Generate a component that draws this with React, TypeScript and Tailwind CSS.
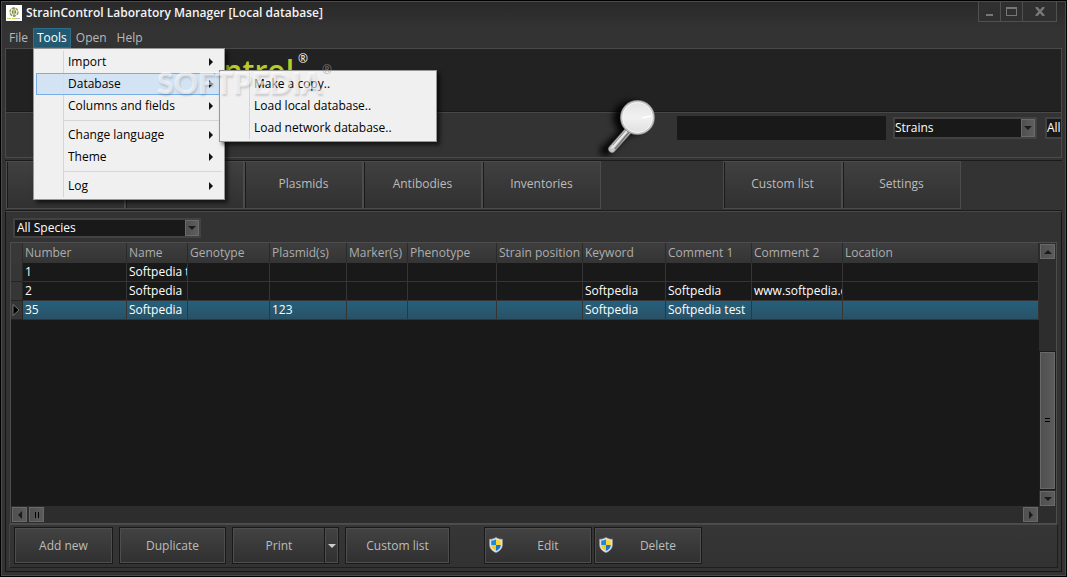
import React from "react";

const UI = "font-['Open_Sans','Noto_Sans',sans-serif]";

function ArrowDown({ className = "" }: { className?: string }) {
  return (
    <svg viewBox="0 0 8 4" className={`h-1 w-2 ${className}`} aria-hidden="true">
      <path d="M0 0h8L4 4z" fill="currentColor" />
    </svg>
  );
}

function Combo({ label, value, className, inset = "p-0" }: { label: string; value: string; className: string; inset?: string }) {
  return (
    <label className={`relative block shrink-0 ${className}`}>
      <select
        aria-label={label}
        className={`block h-full w-full appearance-none border-2 border-[#424242] bg-[#191919] text-xs text-white outline-none ${inset}`}
      >
        <option>{value}</option>
      </select>
      <span className="pointer-events-none absolute right-0.5 top-0.5 bottom-0.5 flex w-3.5 items-center justify-center border border-[#6a6a6a] bg-linear-to-r from-[#505050] to-[#5e5e5e] text-[#1c1c1c]">
        <ArrowDown />
      </span>
    </label>
  );
}

function MenuItem({ text, arrow, active, children }: { text: string; arrow?: boolean; active?: boolean; children?: React.ReactNode }) {
  return (
    <li className="relative">
      <button
        type="button"
        className={`flex h-[22px] w-full items-center justify-between border pl-[31px] pr-2 text-left text-xs text-black ${
          active ? "border-[#78aee5] bg-[#cfe1f3]/90" : "border-transparent"
        }`}
      >
        <span className="whitespace-nowrap">{text}</span>
        {arrow && (
          <svg viewBox="0 0 4 8" className="h-2 w-1" aria-hidden="true">
            <path d="M0 0l4 4-4 4z" fill="#111" />
          </svg>
        )}
      </button>
      {children}
    </li>
  );
}

function MenuPanel({ className, children }: { className: string; children: React.ReactNode }) {
  return (
    <ul
      className={`absolute border border-[#979797] bg-[#f0f0f0] bg-[linear-gradient(#d5d5d5,#d5d5d5)] bg-size-[1px_calc(100%-4px)] bg-position-[29px_2px] bg-no-repeat p-0.5 shadow-[3px_3px_4px_rgba(0,0,0,0.6)] ${className}`}
    >
      {children}
    </ul>
  );
}

function Separator() {
  return (
    <li role="separator" className="flex h-[7px] items-center pl-7">
      <div className="h-px w-full bg-[#d7d7d7]" />
    </li>
  );
}

function ToolsMenu() {
  return (
    <MenuPanel className="left-0 top-5 z-20 w-48">
      <MenuItem text="Import" arrow />
      <MenuItem text="Database" arrow active>
        <MenuPanel className="left-[183px] -top-[3px] z-30 w-[218px]">
          <MenuItem text="Make a copy.." />
          <MenuItem text="Load local database.." />
          <MenuItem text="Load network database.." />
        </MenuPanel>
      </MenuItem>
      <MenuItem text="Columns and fields" arrow />
      <Separator />
      <MenuItem text="Change language" arrow />
      <MenuItem text="Theme" arrow />
      <Separator />
      <MenuItem text="Log" arrow />
    </MenuPanel>
  );
}

function AppIcon() {
  return (
    <svg viewBox="0 0 16 16" className="h-4 w-4" aria-hidden="true">
      <path d="M0 0h16v16H0z" fill="#fff" />
      <circle cx="8" cy="7" r="4" fill="#eef0dc" stroke="#8a9640" strokeWidth="1.3" strokeDasharray="3 1" />
      <path d="M8 2.500v9.500M6.500 5.500v3M9.500 5.500v3" stroke="#7b8450" strokeWidth="1" />
      <path d="M1 13.500h4M6 13.500h4" stroke="#c6d36a" strokeWidth="1" />
      <path d="M10 13.500h4" stroke="#bbb" strokeWidth="1" />
    </svg>
  );
}

function Magnifier({ className }: { className: string }) {
  return (
    <svg viewBox="0 0 72 68" className={`h-[68px] w-[72px] ${className}`} aria-hidden="true">
      <defs>
        <linearGradient id="lens" x1="0" y1="0" x2="0" y2="1">
          <stop offset="0" stopColor="#e4e4e4" />
          <stop offset="0.5" stopColor="#f1f1f1" />
          <stop offset="1" stopColor="#e0e0e0" />
        </linearGradient>
        <filter id="soft" x="-40%" y="-40%" width="180%" height="180%">
          <feGaussianBlur stdDeviation="3" />
        </filter>
      </defs>
      <g filter="url(#soft)" opacity="0.9">
        <circle cx="35" cy="29" r="17" fill="#000" />
        <path d="M29 44L10 62" stroke="#000" strokeWidth="10" strokeLinecap="round" />
      </g>
      <path d="M33 42L17 60" stroke="#555" strokeWidth="8" strokeLinecap="round" />
      <path d="M33 42L17 60" stroke="#c4c4c4" strokeWidth="6.500" strokeLinecap="round" />
      <path d="M32 40L18 56" stroke="#8a8a8a" strokeWidth="1" />
      <path d="M35 42L20 60" stroke="#777" strokeWidth="1.500" />
      <path d="M33 41L17 59" stroke="#f0f0f0" strokeWidth="1.500" strokeLinecap="round" />
      <circle cx="42.500" cy="28.500" r="17.500" fill="#777" />
      <circle cx="42.500" cy="28.500" r="16.800" fill="#c4c4c4" />
      <circle cx="42.500" cy="28.500" r="15" fill="url(#lens)" stroke="#f6f6f6" strokeWidth="1" />
      <path d="M47 29l9-2" stroke="#fff" strokeWidth="1.500" />
    </svg>
  );
}

function Shield() {
  return (
    <svg viewBox="0 0 14 16" className="h-4 w-3.5" aria-hidden="true">
      <path d="M7 .4C5 1.800 3 2.200.6 2.200v5.300c0 4 2.700 6.700 6.400 8.100 3.700-1.400 6.400-4.100 6.400-8.100V2.200C11 2.200 9 1.800 7 .4z" fill="#e4e8ec" stroke="#9ba3a8" strokeWidth=".6" />
      <path d="M7 2.200C5.500 3.100 4 3.500 2.200 3.600V8H7z" fill="#1f86e0" />
      <path d="M7 2.200c1.500.9 3 1.300 4.800 1.400V8H7z" fill="#fbd72e" />
      <path d="M2.200 8c.2 2.900 2 4.800 4.800 6V8z" fill="#f7cb1c" />
      <path d="M11.800 8c-.2 2.900-2 4.800-4.800 6V8z" fill="#1b74cf" />
    </svg>
  );
}

function TitleBar() {
  return (
    <header className="flex h-[26px] items-start justify-between bg-linear-to-b from-[#292929] to-[#333] pr-2">
      <div className="flex h-[22px] items-center gap-1 pl-1">
        <AppIcon />
        <h1 className="text-xs leading-4 font-semibold text-[#f4f4f4]">StrainControl Laboratory Manager [Local database]</h1>
      </div>
      <div className="flex h-5 divide-x divide-[#505050] border-x border-b border-[#505050] bg-[#303030] text-[#777]">
        <button type="button" aria-label="Minimize" className="flex w-[22px] items-center justify-center">
          <svg viewBox="0 0 8 8" className="h-2 w-2"><path d="M0 6h7v2H0z" fill="currentColor" /></svg>
        </button>
        <button type="button" aria-label="Maximize" className="flex w-[22px] items-center justify-center">
          <svg viewBox="0 0 11 9" className="h-[9px] w-[11px]"><path d="M0 0h11v9H0zM1 2v6h9V2z" fill="currentColor" fillRule="evenodd" /></svg>
        </button>
        <button type="button" aria-label="Close" className="flex w-[33px] items-center justify-center">
          <svg viewBox="0 0 10 9" className="h-[9px] w-2.5"><path d="M1 0l8 9M9 0L1 9" stroke="currentColor" strokeWidth="2.500" /></svg>
        </button>
      </div>
    </header>
  );
}

function MenuBar() {
  const item = "h-5 px-[5px] text-xs text-[#b8b8b8]";
  return (
    <nav className="flex h-5 pl-0.5">
      <button type="button" className={item}>File</button>
      <div className="relative">
        <button type="button" className="h-5 border border-[#2f6e8a] bg-[#235a72] px-[3px] text-xs text-white">Tools</button>
        <ToolsMenu />
      </div>
      <button type="button" className={item}>Open</button>
      <button type="button" className={item}>Help</button>
    </nav>
  );
}

function Banner() {
  return (
    <section className="relative border border-[#4a4a4a] bg-[#333]">
      <div className="flex h-[63px] overflow-hidden border-b border-[#191919] bg-[#222] pl-[94px]">
        <div className="flex items-start pt-1 text-3xl leading-9 font-semibold text-[#b9cc27]">
          StrainControl<sup className="top-0 pl-1 text-xs leading-3 text-[#e8e8e8]">®</sup>
        </div>
      </div>
      <div className="flex h-[45px] items-start justify-end border-t border-[#484848] pt-[3px]">
        <input aria-label="Search" type="text" className="mr-[7px] h-6 w-[209px] bg-[#191919] px-1 text-xs text-white outline-none" />
        <Combo label="Search in" value="Strains" className="mr-2 mt-px h-[22px] w-36" />
        <div className="mt-px w-4 shrink-0 overflow-hidden">
          <Combo label="Search field" value="All" className="h-[22px] w-36" />
        </div>
      </div>
      <Magnifier className="absolute bottom-0 right-[394px]" />
    </section>
  );
}

const tabFace =
  "h-12 w-[119px] border border-[#4c4c4c] bg-linear-to-b from-[#404040] to-[#313131] pb-0.5 text-xs text-[#bcbcbc] shadow-[1px_0_0_#1a1a1a_inset]";

function Tabs() {
  return (
    <nav className="mt-0.5 flex h-[51px] border-y border-[#1b1b1b] pl-px">
      {["Strains", "Oligos", "Plasmids", "Antibodies", "Inventories"].map((t) => (
        <button key={t} type="button" className={tabFace}>{t}</button>
      ))}
      <div className="ml-[122px] flex">
        <button type="button" className={tabFace}>Custom list</button>
        <button type="button" className={tabFace}>Settings</button>
      </div>
    </nav>
  );
}

const columns: [string, string][] = [
  ["Number", "w-[104px]"],
  ["Name", "w-[61px]"],
  ["Genotype", "w-[82px]"],
  ["Plasmid(s)", "w-[77px]"],
  ["Marker(s)", "w-[61px]"],
  ["Phenotype", "w-[89px]"],
  ["Strain position", "w-[86px]"],
  ["Keyword", "w-[83px]"],
  ["Comment 1", "w-[86px]"],
  ["Comment 2", "w-[91px]"],
  ["Location", ""],
];

const rows: string[][] = [
  ["1", "Softpedia test", "", "", "", "", "", "", "", "", ""],
  ["2", "Softpedia", "", "", "", "", "", "Softpedia", "Softpedia", "www.softpedia.com", ""],
  ["35", "Softpedia", "", "123", "", "", "", "Softpedia", "Softpedia test", "", ""],
];

const scrollFace = "flex items-center justify-center border border-[#696969] bg-linear-to-r from-[#505050] to-[#5b5b5b] text-[#1a1a1a]";

function Grid() {
  return (
    <div className="mx-1 flex flex-1 border border-[#4d4d4d] bg-[#191919]">
      <div className="flex min-w-0 flex-1 flex-col">
        <div className="flex-1">
          <table className="w-full table-fixed border-separate border-spacing-0 text-xs leading-[18px]">
            <colgroup>
              <col className="w-3" />
              {columns.map(([name, w]) => <col key={name} className={w} />)}
            </colgroup>
            <thead>
              <tr>
                <th className="h-5 border-r border-[#2a2a2a] bg-[#383838] p-0" />
                {columns.map(([name]) => (
                  <th key={name} className="h-5 overflow-hidden whitespace-nowrap border-r border-[#2a2a2a] bg-linear-to-b from-[#3e3e3e] to-[#343434] p-0 pl-0.5 text-left font-normal text-[#adadad]">
                    {name}
                  </th>
                ))}
              </tr>
            </thead>
            <tbody>
              {rows.map((row, r) => {
                const selected = r === 2;
                return (
                  <tr key={row[0]}>
                    <td className="h-[19px] border-b border-r border-[#252525] bg-[#363636] p-0">
                      {selected && (
                        <svg viewBox="0 0 11 18" className="block h-[18px] w-[11px]" aria-hidden="true">
                          <path d="M2 3.500l6 5.500-6 5.500z" fill="#000" stroke="#8a8a8a" strokeWidth=".8" />
                        </svg>
                      )}
                    </td>
                    {row.map((cell, c) => (
                      <td
                        key={c}
                        className={`h-[19px] overflow-hidden whitespace-nowrap border-b border-r border-[#353535] p-0 pl-0.5 text-white ${
                          selected ? "bg-linear-to-b from-[#24607c] to-[#2a5165]" : ""
                        }`}
                      >
                        {cell}
                      </td>
                    ))}
                  </tr>
                );
              })}
            </tbody>
          </table>
        </div>
        <div className="flex h-[17px] justify-between bg-[#2d2d2d] p-px">
          <div className="flex gap-0.5">
            <button type="button" aria-label="Scroll left" className={`w-[15px] ${scrollFace}`}>
              <svg viewBox="0 0 4 8" className="h-2 w-1"><path d="M4 0L0 4l4 4z" fill="currentColor" /></svg>
            </button>
            <div className={`w-[15px] gap-px ${scrollFace}`}>
              <span className="h-1.5 w-px bg-black" />
              <span className="ml-px h-1.5 w-px bg-black" />
            </div>
          </div>
          <button type="button" aria-label="Scroll right" className={`w-[15px] ${scrollFace}`}>
            <svg viewBox="0 0 4 8" className="h-2 w-1"><path d="M0 0l4 4-4 4z" fill="currentColor" /></svg>
          </button>
        </div>
      </div>
      <div className="flex w-[17px] flex-col bg-[#2d2d2d] px-px pb-[17px]">
        <button type="button" aria-label="Scroll up" className={`mt-px h-[15px] ${scrollFace}`}>
          <svg viewBox="0 0 8 4" className="h-1 w-2"><path d="M4 0l4 4H0z" fill="currentColor" /></svg>
        </button>
        <div className="flex-[93]" />
        <div className={`flex-[136] flex-col gap-0.5 outline outline-[#1b1b1b] ${scrollFace}`}>
          <span className="h-px w-[5px] bg-black" />
          <span className="h-px w-[5px] bg-black" />
        </div>
        <button type="button" aria-label="Scroll down" className={`mt-0.5 h-[15px] ${scrollFace}`}>
          <ArrowDown />
        </button>
      </div>
    </div>
  );
}

const actionFace =
  "relative h-[35px] border border-[#4e4e4e] bg-linear-to-b from-[#424242] to-[#313131] text-xs text-[#bcbcbc] outline outline-[#191919]";

function Actions() {
  return (
    <footer className="mx-[3px] flex h-11 gap-2 border border-[#1e1e1e] border-t-[#4a4a4a] border-l-[#454545] bg-linear-to-b from-[#363636] to-[#323232] pl-[5px] pt-[3px]">
      <button type="button" className={`w-[97px] ${actionFace}`}>Add new</button>
      <button type="button" className={`w-[105px] ${actionFace}`}>Duplicate</button>
      <div className="flex">
        <button type="button" className={`w-[92px] ${actionFace}`}>Print</button>
        <button type="button" aria-label="Print options" className={`flex w-[13px] items-center justify-center ${actionFace}`}>
          <ArrowDown className="shrink-0 text-[#ccc]" />
        </button>
      </div>
      <button type="button" className={`w-[103px] ${actionFace}`}>Custom list</button>
      <div className="ml-7 flex gap-1">
        {["Edit", "Delete"].map((t) => (
          <button key={t} type="button" className={`w-[106px] pl-5 ${actionFace}`}>
            <span className="absolute left-[3px] top-2"><Shield /></span>
            {t}
          </button>
        ))}
      </div>
    </footer>
  );
}

export default function App() {
  return (
    <div className={`flex min-h-screen flex-col overflow-hidden bg-black p-px leading-4 ${UI}`}>
      <div className="relative flex flex-1 flex-col border border-[#4b4b4b] bg-[#333] pb-[3px]">
        <TitleBar />
        <MenuBar />
        <main className="mx-[3px] flex flex-1 flex-col">
          <Banner />
          <Tabs />
          <section className="flex flex-1 flex-col border border-[#161616] border-t-[#484848] pb-[3px]">
            <Combo label="Species" value="All Species" inset="p-0 pl-0.5" className="mb-1 ml-[7px] mt-1.5 h-5 w-[188px]" />
            <Grid />
            <Actions />
          </section>
        </main>
        <div className="pointer-events-none absolute left-[155px] top-[60px] z-40 flex items-start text-white/55">
          <span className="font-['Lato',sans-serif] text-[30px] font-black leading-10 [text-shadow:1px_2px_2px_rgba(0,0,0,0.15)]">SOFTPEDIA</span>
          <span className="text-xs text-[#999]/70">®</span>
        </div>
      </div>
    </div>
  );
}
